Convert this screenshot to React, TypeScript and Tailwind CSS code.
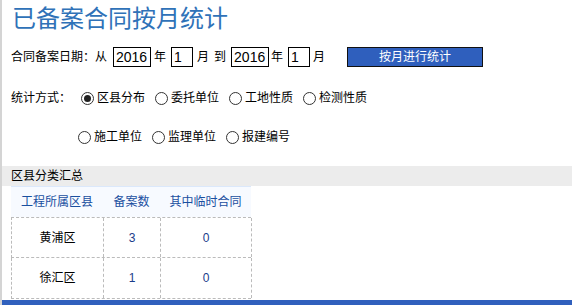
import React from 'react';

const cjk = { fontFamily: '"Liberation Sans", "Noto Sans CJK SC", sans-serif' };

function Box({ value, w }: { value: string; w: string }) {
  return (
    <span className={`inline-flex h-[20px] ${w} items-center border border-black bg-white px-[2px] text-[14px] leading-none text-black`}>
      {value}
    </span>
  );
}

function Radio({ label, checked }: { label: string; checked?: boolean }) {
  return (
    <span className="inline-flex items-center gap-[3px]">
      <span className="flex h-[13px] w-[13px] items-center justify-center rounded-full border border-[#333] bg-white">
        {checked && <span className="h-[7px] w-[7px] rounded-full bg-[#222]" />}
      </span>
      <span>{label}</span>
    </span>
  );
}

export default function App() {
  const rows = [
    { area: '黄浦区', count: '3', temp: '0' },
    { area: '徐汇区', count: '1', temp: '0' },
  ];
  return (
    <div className="flex h-[305px] w-[572px] flex-col overflow-hidden border-l-2 border-[#d4d4d4] bg-white text-[12px] text-black" style={cjk}>
      <h1 className="ml-[10px] mt-[4px] h-[30px] text-[24px] leading-[30px] text-[#2f72b8]">已备案合同按月统计</h1>

      <div className="ml-[9px] mt-[13px] flex h-[20px] items-center">
        <span>合同备案日期：从</span>
        <span className="ml-[6px]"><Box value="2016" w="w-[38px]" /></span>
        <span className="ml-[3px]">年</span>
        <span className="ml-[5px]"><Box value="1" w="w-[22px]" /></span>
        <span className="ml-[4px]">月</span>
        <span className="ml-[5px]">到</span>
        <span className="ml-[5px]"><Box value="2016" w="w-[38px]" /></span>
        <span className="ml-[2px]">年</span>
        <span className="ml-[5px]"><Box value="1" w="w-[22px]" /></span>
        <span className="ml-[3px]">月</span>
        <button className="ml-[22px] h-[20px] w-[136px] border border-[#111] bg-[#2f5fbd] text-[12px] text-white">按月进行统计</button>
      </div>

      <div className="ml-[9px] mt-[22px] flex h-[18px] items-center">
        <span className="w-[70px]">统计方式：</span>
        <div className="flex items-center gap-[10px]">
          <Radio label="区县分布" checked />
          <Radio label="委托单位" />
          <Radio label="工地性质" />
          <Radio label="检测性质" />
        </div>
      </div>

      <div className="ml-[76px] mt-[21px] flex h-[18px] items-center gap-[10px]">
        <Radio label="施工单位" />
        <Radio label="监理单位" />
        <Radio label="报建编号" />
      </div>

      <div className="mt-[20px] flex h-[20px] shrink-0 items-center bg-[#ececec] pl-[9px]">区县分类汇总</div>

      <div className="ml-[9px] w-[240px]">
        <div className="grid h-[31px] grid-cols-[92px_57px_91px] items-center border-t border-[#dbe8fb] bg-[#f7faff] text-center text-[#1a4f9f]">
          <span>工程所属区县</span>
          <span>备案数</span>
          <span>其中临时合同</span>
        </div>
        {rows.map((r, i) => (
          <div
            key={r.area}
            className={i === 0
              ? 'grid h-[41px] grid-cols-[92px_57px_91px] border-y border-l border-dashed border-[#bbb] text-center'
              : 'grid h-[41px] grid-cols-[92px_57px_91px] border-b border-l border-dashed border-[#bbb] text-center'}
          >
            <span className="flex items-center justify-center border-r border-dashed border-[#bbb]">{r.area}</span>
            <span className="flex items-center justify-center border-r border-dashed border-[#bbb] text-[#1a3c8a]">{r.count}</span>
            <span className="flex items-center justify-center border-r border-dashed border-[#bbb] text-[#1a3c8a]">{r.temp}</span>
          </div>
        ))}
      </div>

      <div className="mt-auto h-[5px] shrink-0 bg-[#3060bd]" />
    </div>
  );
}
